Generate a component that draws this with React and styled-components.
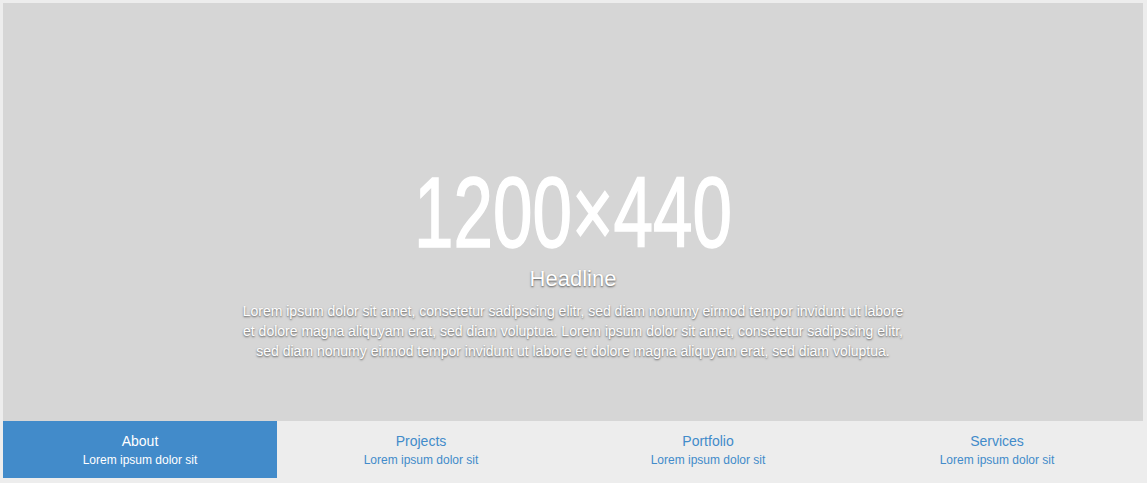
import React, { useState } from 'react'
import styled, { createGlobalStyle } from 'styled-components'

const GlobalStyle = createGlobalStyle`
  html, body {
    margin: 0;
    padding: 0;
    background: #fff;
    font-family: "Liberation Sans", Arial, sans-serif;
  }
`

const tabs = [
  { title: 'About', sub: 'Lorem ipsum dolor sit', width: '274px' },
  { title: 'Projects', sub: 'Lorem ipsum dolor sit', width: '288px' },
  { title: 'Portfolio', sub: 'Lorem ipsum dolor sit', width: '286px' },
  { title: 'Services', sub: 'Lorem ipsum dolor sit', width: '1fr' }
]

const text =
  'Lorem ipsum dolor sit amet, consetetur sadipscing elitr, sed diam nonumy eirmod tempor invidunt ut labore et dolore magna aliquyam erat, sed diam voluptua. Lorem ipsum dolor sit amet, consetetur sadipscing elitr, sed diam nonumy eirmod tempor invidunt ut labore et dolore magna aliquyam erat, sed diam voluptua.'

export default function App() {
  const [active, setActive] = useState(0)
  return (
    <>
      <GlobalStyle />
      <Carousel>
        <Slide>
          <Placeholder viewBox="0 0 340 100" width="340" height="100">
            <text
              x="11"
              y="85"
              textLength="318"
              lengthAdjust="spacingAndGlyphs"
              fill="#fff"
              stroke="#fff"
              strokeWidth="1.6"
              fontFamily="Liberation Sans, Arial, sans-serif"
              fontSize="100"
            >
              1200×440
            </text>
          </Placeholder>
          <Caption>
            <h3>Headline</h3>
            <p>{text}</p>
          </Caption>
        </Slide>
        <TabRow cols={tabs.map((t) => t.width).join(' ')}>
          {tabs.map((t, i) => (
            <Tab key={t.title} active={i === active} onClick={() => setActive(i)}>
              <h4>{t.title}</h4>
              <small>{t.sub}</small>
            </Tab>
          ))}
        </TabRow>
      </Carousel>
    </>
  )
}

const Carousel = styled.div`
  width: 1147px;
  box-sizing: border-box;
  padding: 3px 4px 5px 3px;
  background: #ededed;
`

const Slide = styled.div`
  position: relative;
  height: 418px;
  background: #d6d6d6;
  display: flex;
  align-items: center;
  justify-content: center;
`

const Placeholder = styled.svg`
  display: block;
`

const Caption = styled.div`
  position: absolute;
  left: 0;
  right: 0;
  bottom: 60px;
  display: flex;
  flex-direction: column;
  align-items: center;
  color: #fff;
  text-align: center;
  text-shadow: 0 1px 2px rgba(0, 0, 0, 0.6);
  h3 {
    margin: 0 0 9px;
    font-size: 22px;
    font-weight: normal;
    line-height: 26px;
  }
  p {
    margin: 0;
    max-width: 668px;
    font-size: 14px;
    line-height: 20px;
  }
`

const TabRow = styled.div`
  display: grid;
  grid-template-columns: ${(p) => p.cols};
  height: 57px;
`

const Tab = styled.div`
  display: flex;
  flex-direction: column;
  align-items: center;
  justify-content: center;
  padding-top: 2px;
  cursor: pointer;
  background: ${(p) => (p.active ? '#428bca' : '#ededed')};
  color: ${(p) => (p.active ? '#fff' : '#428bca')};
  h4 {
    margin: 0;
    font-size: 14px;
    font-weight: normal;
    line-height: 19px;
  }
  small {
    margin-top: 1px;
    font-size: 12px;
    line-height: 17px;
  }
`
